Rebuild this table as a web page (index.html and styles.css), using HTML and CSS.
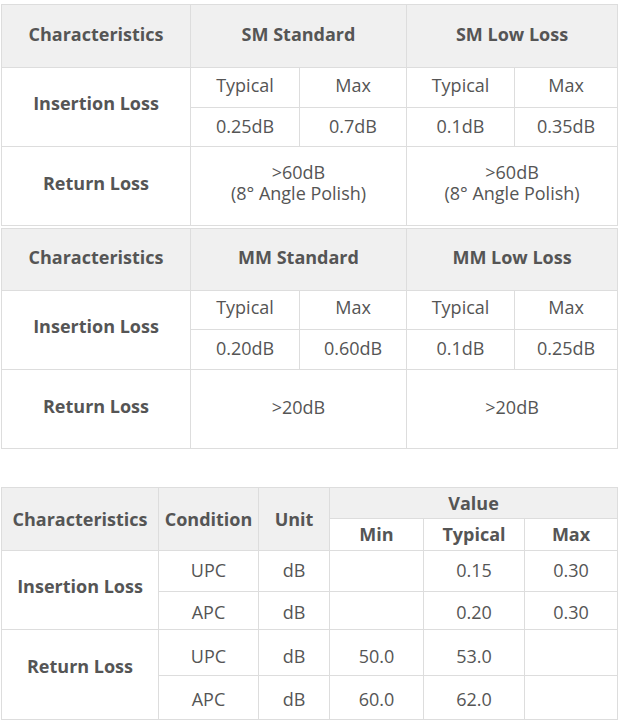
FILE: index.html
```html
<!DOCTYPE html>
<html>
<head>
<meta charset="utf-8">
<link rel="stylesheet" href="styles.css">
</head>
<body>
<div class="page">
  <table class="spec spec-a">
    <colgroup><col class="c1"><col class="c2"><col class="c3"><col class="c4"><col class="c5"></colgroup>
    <tr class="r-head"><th>Characteristics</th><th colspan="2">SM Standard</th><th colspan="2">SM Low Loss</th></tr>
    <tr class="r-sub"><th class="rowhead" rowspan="2">Insertion Loss</th><td>Typical</td><td>Max</td><td>Typical</td><td>Max</td></tr>
    <tr class="r-val"><td>0.25dB</td><td>0.7dB</td><td>0.1dB</td><td>0.35dB</td></tr>
    <tr class="r-ret"><th class="rowhead">Return Loss</th><td colspan="2" class="two">&gt;60dB<br>(8° Angle Polish)</td><td colspan="2" class="two">&gt;60dB<br>(8° Angle Polish)</td></tr>
  </table>
  <table class="spec spec-b">
    <colgroup><col class="c1"><col class="c2"><col class="c3"><col class="c4"><col class="c5"></colgroup>
    <tr class="r-head"><th>Characteristics</th><th colspan="2">MM Standard</th><th colspan="2">MM Low Loss</th></tr>
    <tr class="r-sub"><th class="rowhead" rowspan="2">Insertion Loss</th><td>Typical</td><td>Max</td><td>Typical</td><td>Max</td></tr>
    <tr class="r-val"><td>0.20dB</td><td>0.60dB</td><td>0.1dB</td><td>0.25dB</td></tr>
    <tr class="r-ret"><th class="rowhead">Return Loss</th><td colspan="2">&gt;20dB</td><td colspan="2">&gt;20dB</td></tr>
  </table>
  <table class="spec spec-c">
    <colgroup><col class="d1"><col class="d2"><col class="d3"><col class="d4"><col class="d5"><col class="d6"></colgroup>
    <tr class="h1"><th rowspan="2">Characteristics</th><th rowspan="2">Condition</th><th rowspan="2">Unit</th><th colspan="3">Value</th></tr>
    <tr class="h2"><th class="white">Min</th><th class="white">Typical</th><th class="white">Max</th></tr>
    <tr class="b1"><th class="rowhead" rowspan="2">Insertion Loss</th><td>UPC</td><td>dB</td><td></td><td>0.15</td><td>0.30</td></tr>
    <tr class="b2"><td>APC</td><td>dB</td><td></td><td>0.20</td><td>0.30</td></tr>
    <tr class="b3"><th class="rowhead rl" rowspan="2">Return Loss</th><td>UPC</td><td>dB</td><td>50.0</td><td>53.0</td><td></td></tr>
    <tr class="b4"><td>APC</td><td>dB</td><td>60.0</td><td>62.0</td><td></td></tr>
  </table>
</div>
</body>
</html>
```
FILE: styles.css
```css
html, body {
  margin: 0;
  padding: 0;
  background: #fff;
}
.page {
  padding: 4px 0 0 1px;
  font-family: "Open Sans", "Liberation Sans", sans-serif;
  font-size: 18px;
  color: #555;
}
.spec {
  border-collapse: collapse;
  table-layout: fixed;
  width: 616px;
}
.spec th, .spec td {
  border: 1px solid #ddd;
  padding: 0;
  text-align: center;
  vertical-align: middle;
  line-height: 21px;
}
.spec th {
  font-weight: 700;
  color: #555;
}
.spec td {
  font-weight: 400;
  color: #555;
}
.spec-a, .spec-b {
  margin-bottom: 2px;
}
.spec-c {
  margin-top: 38px;
}
.c1 { width: 189px; }
.c2 { width: 109px; }
.c3 { width: 107px; }
.c4 { width: 108px; }
.c5 { width: 103px; }

/* table 1 rows */
.spec-a .r-head { height: 63px; }
.spec-a .r-sub { height: 40px; }
.spec-a .r-val { height: 39px; }
.spec-a .r-ret { height: 79px; }
/* table 2 rows */
.spec-b .r-head { height: 62px; }
.spec-b .r-sub { height: 39px; }
.spec-b .r-val { height: 40px; }
.spec-b .r-ret { height: 79px; }

.r-head th {
  background: #f0f0f0;
  padding-bottom: 3px;
}
.spec-b .r-head th { padding-bottom: 5px; }
.r-sub td { padding-bottom: 5px; }
.r-sub .rowhead { padding-bottom: 7px; }
.r-val td { padding-bottom: 2px; }
.r-ret th, .r-ret td { padding-bottom: 6px; }
.spec-b .r-ret td { padding-bottom: 3px; }
.two { line-height: 20px; }

.d1 { width: 157px; }
.d2 { width: 100px; }
.d3 { width: 71px; }
.d4 { width: 94px; }
.d5 { width: 101px; }
.d6 { width: 93px; }
.h1 { height: 31px; }
.h2 { height: 32px; }
.h1 th { background: #f0f0f0; }
.h2 th.white { background: #fff; }
.b1 { height: 41px; }
.b2 { height: 38px; }
.b3 { height: 46px; }
.b4 { height: 44px; }
.b1 td { padding-bottom: 2px; }
.b1 .rowhead { padding-bottom: 7px; }
.b2 td { padding-top: 4px; }
.b3 td { padding-top: 8px; }
.b4 td { padding-top: 4px; }
.b3 .rl { padding-top: 0; padding-bottom: 16px; }
```
